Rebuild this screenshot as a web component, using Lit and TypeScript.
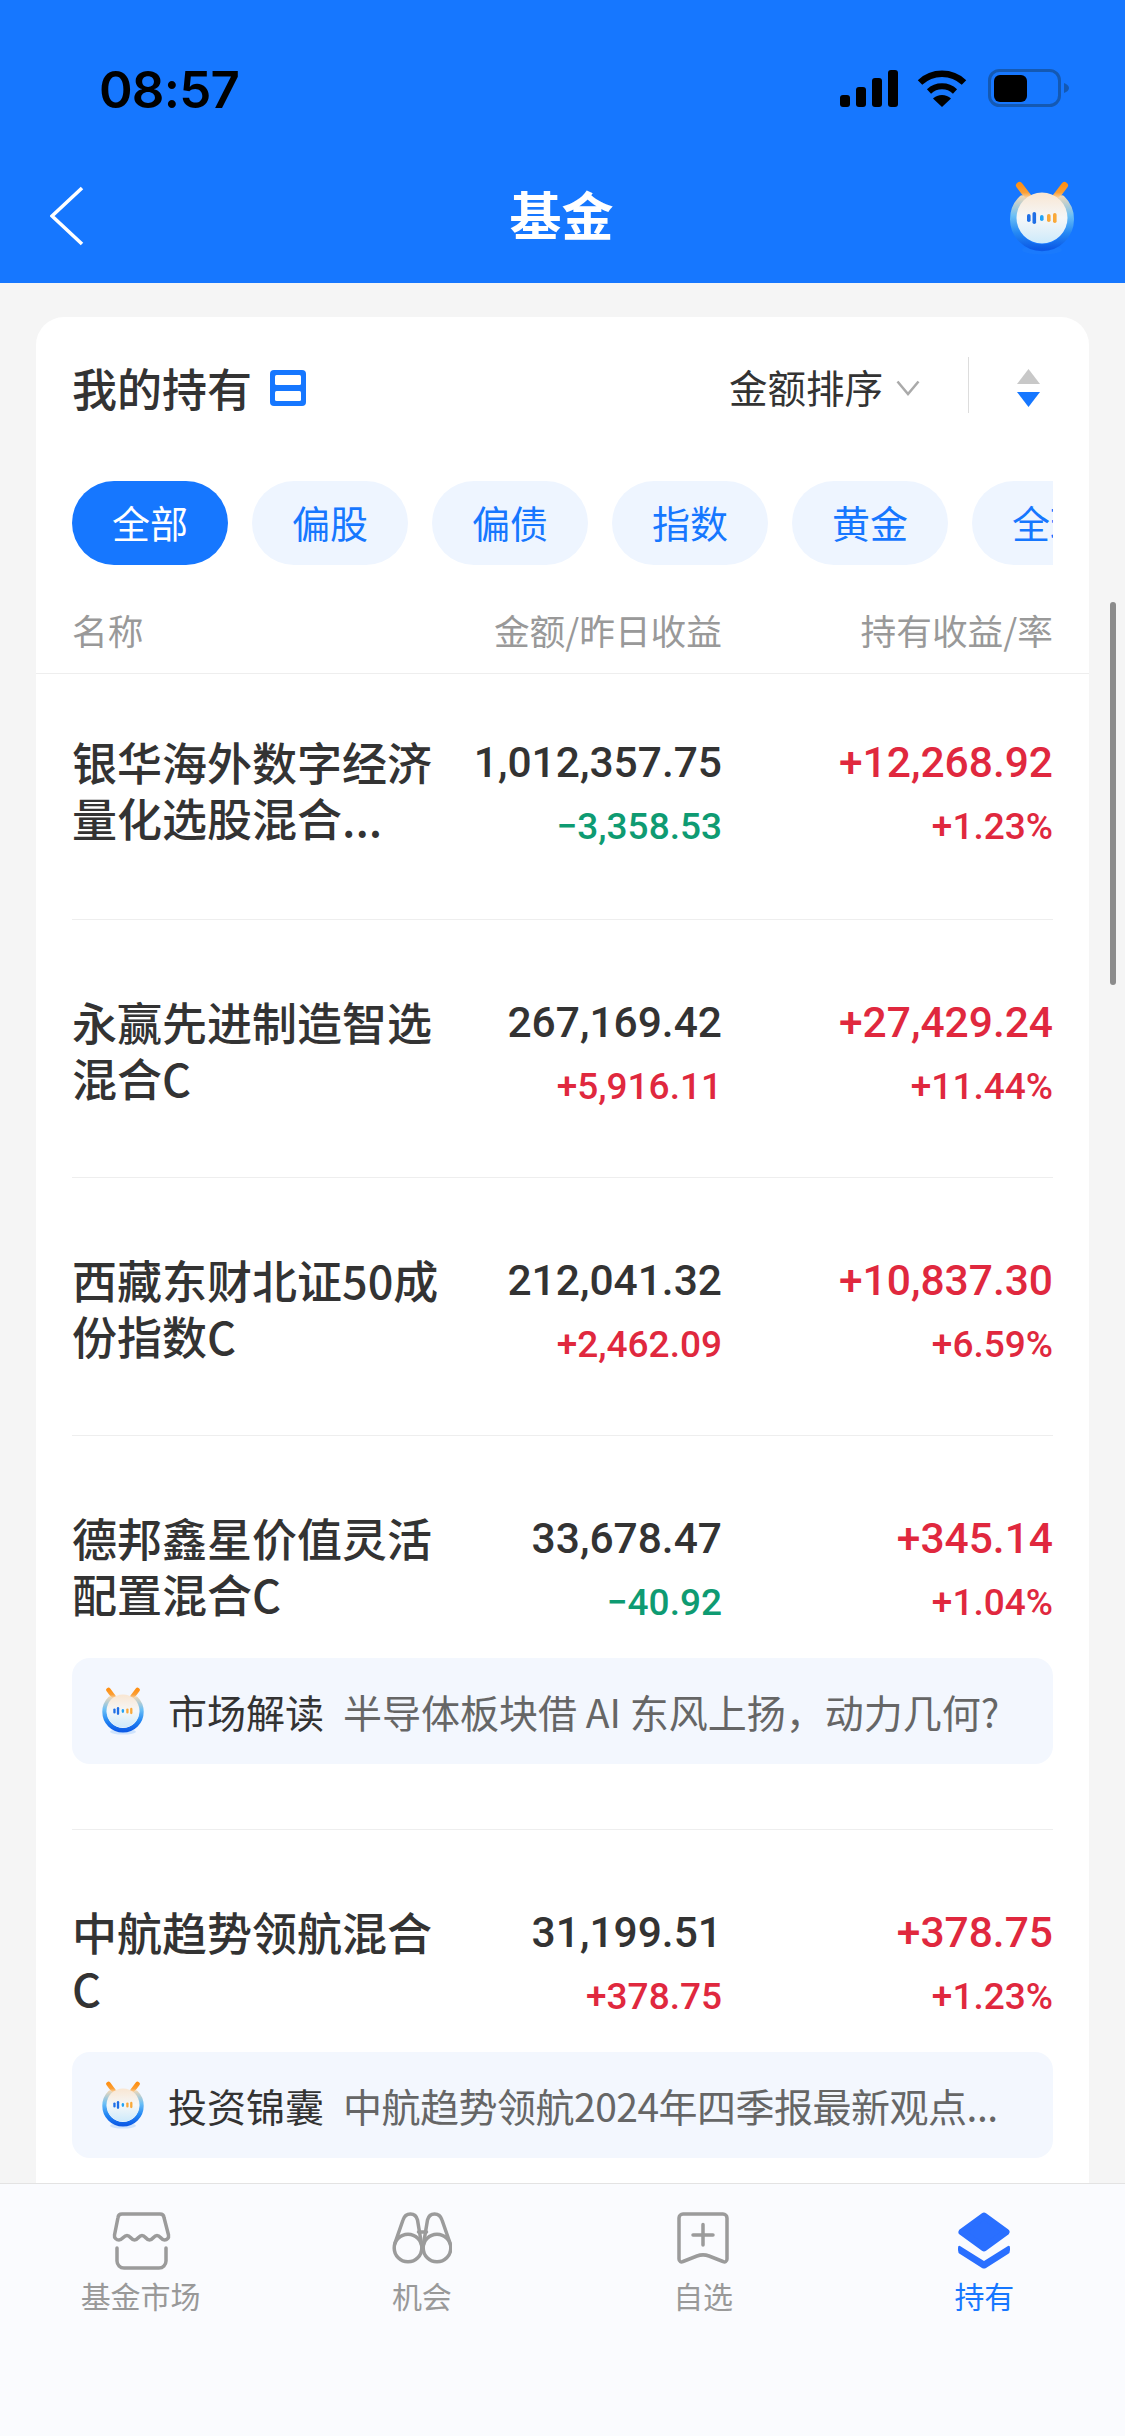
import { LitElement, html, css, svg } from "lit";
import { customElement } from "lit/decorators.js";

@customElement("mascot-icon")
class MascotIcon extends LitElement {
  static styles = css`
    :host { display: block; }
    svg { display: block; width: 100%; height: 100%; }
  `;
  render() {
    return html`<svg viewBox="-34 -38 68 74" aria-hidden="true">
      <defs>
        <linearGradient id="ring" gradientUnits="userSpaceOnUse" x1="0" y1="-24" x2="0" y2="30">
          <stop offset="0" stop-color="#f6d9b4"/>
          <stop offset="0.38" stop-color="#6cc0f6"/>
          <stop offset="0.7" stop-color="#2488f4"/>
          <stop offset="1" stop-color="#0c5ae6"/>
        </linearGradient>
        <linearGradient id="disc" x1="0.5" y1="0" x2="0.5" y2="1">
          <stop offset="0" stop-color="#f9e6d2"/>
          <stop offset="0.5" stop-color="#f5f7f8"/>
          <stop offset="1" stop-color="#cdeafb"/>
        </linearGradient>
        <linearGradient id="ear" gradientUnits="userSpaceOnUse" x1="0" y1="-35" x2="0" y2="-21">
          <stop offset="0" stop-color="#ff8f12"/>
          <stop offset="0.6" stop-color="#fb9f35"/>
          <stop offset="1" stop-color="#f8d3a4"/>
        </linearGradient>
      </defs>
      <ellipse cx="0" cy="31" rx="20" ry="4.500" fill="#2a8cf5" opacity="0.18"/>
      <path d="M-22.500 -33.500L-13 -21" stroke="url(#ear)" stroke-width="7" stroke-linecap="round" fill="none"/>
      <path d="M22.500 -33.500L13 -21" stroke="url(#ear)" stroke-width="7" stroke-linecap="round" fill="none"/>
      <path d="M-20 -20A28.500 28.500 0 1 0 20 -20" fill="none" stroke="url(#ring)" stroke-width="7" stroke-linecap="round"/>
      <circle cx="0" cy="-1" r="25.500" fill="url(#disc)"/>
      <rect x="-15" y="-5" width="3.600" height="8" rx="1.800" fill="#1f6fe6"/>
      <rect x="-9.500" y="-7" width="3.600" height="12" rx="1.800" fill="#1f6fe6"/>
      <rect x="-2" y="-4" width="3.600" height="6" rx="1.800" fill="#22a4f5"/>
      <rect x="5" y="-5" width="3.600" height="8" rx="1.800" fill="#f9a93a"/>
      <rect x="11" y="-6" width="3.600" height="10" rx="1.800" fill="#f9a93a"/>
    </svg>`;
  }
}

interface Fund {
  name: string[];
  amount: string;
  daily: string;
  gain: string;
  rate: string;
  banner?: [string, string];
  tight?: boolean;
}

const FUNDS: Fund[] = [
  { name: ["银华海外数字经济", "量化选股混合..."], amount: "1,012,357.75", daily: "−3,358.53", gain: "+12,268.92", rate: "+1.23%" },
  { name: ["永赢先进制造智选", "混合C"], amount: "267,169.42", daily: "+5,916.11", gain: "+27,429.24", rate: "+11.44%" },
  { name: ["西藏东财北证50成", "份指数C"], amount: "212,041.32", daily: "+2,462.09", gain: "+10,837.30", rate: "+6.59%" },
  { name: ["德邦鑫星价值灵活", "配置混合C"], amount: "33,678.47", daily: "−40.92", gain: "+345.14", rate: "+1.04%", banner: ["市场解读", "半导体板块借 AI 东风上扬，动力几何?"] },
  { name: ["中航趋势领航混合", "C"], amount: "31,199.51", daily: "+378.75", gain: "+378.75", rate: "+1.23%", banner: ["投资锦囊", "中航趋势领航2024年四季报最新观点..."], tight: true },
];

const CHIPS = ["全部", "偏股", "偏债", "指数", "黄金", "全球"];

const storeIcon = svg`<path d="M11 3H49a4 4 0 0 1 4 3.500L57.500 24c.6 3-1.500 5-4 5-3.500 0-4-4.500-7.500-4.500S42 29 38.500 29 34.500 24.500 31 24.500 27 29 23.500 29 19.500 24.500 16 24.500 11.500 29 8 29c-2.500 0-5-2-4.500-5L7 6.500A4 4 0 0 1 11 3Z"/><path d="M6 37V50a7 7 0 0 0 7 7H48a7 7 0 0 0 7-7V37"/>`;
const binoIcon = svg`<circle cx="16" cy="37" r="13.800"/><circle cx="45" cy="37" r="13.800"/><path d="M3 32L11 9C13.500 1 23.500 1 25.500 9L29.500 33"/><path d="M58 32L50 9C47.500 1 37.500 1 35.500 9L31.500 33"/><path d="M26.500 21H34.500"/>`;
const bookIcon = svg`<path d="M7 3H47a4 4 0 0 1 4 4V48c0 2.500-2 3.500-4 2.500L33 45c-4-1.500-8-1.500-12 0L7 50.500c-2 1-4 0-4-2.500V7a4 4 0 0 1 4-4Z"/><path d="M27 13.500V34M17 24H37"/>`;

const TABS = [
  { label: "基金市场", w: 60, vb: "0 0 60 60", icon: storeIcon },
  { label: "机会", w: 60, vb: "0 0 60 60", icon: binoIcon },
  { label: "自选", w: 54, vb: "0 0 54 60", icon: bookIcon },
];

@customElement("app-root")
class AppRoot extends LitElement {
  static styles = css`
    :host {
      display: flex;
      flex-direction: column;
      width: 1125px;
      height: 2436px;
      overflow: hidden;
      background: #f5f5f5;
      color: #333;
      font-family: "Noto Sans CJK SC", "Noto Sans", sans-serif;
    }
    .head { background: #1677ff; height: 283px; flex: none; }
    .status {
      height: 176px; display: flex; align-items: center; justify-content: space-between;
      padding: 0 56px 0 99px; box-sizing: border-box;
    }
    .time {
      font-family: Inter, "Liberation Sans", sans-serif; font-weight: 600; font-size: 51px;
      letter-spacing: -0.800px; color: #000; line-height: 1; padding-top: 2px;
    }
    .sys { display: flex; align-items: center; gap: 19px; }
    .sys svg { display: block; }
    .nav {
      height: 80px; display: grid; grid-template-columns: 1fr auto 1fr; align-items: center;
      padding: 0 52px 0 50px;
    }
    .nav-title { color: #fff; font-size: 52px; font-weight: 700; line-height: 1; padding-bottom: 5px; }
    .back { display: block; }
    .nav-end { justify-self: end; width: 68px; height: 74px; margin: 4px -3px 0 0; }

    .main { position: relative; flex: 1; overflow: hidden; padding-top: 34px; min-height: 0; }
    .card {
      margin: 0 36px; background: #fff; border-radius: 28px 28px 0 0; padding-top: 34px;
    }
    .title-row {
      height: 74px; display: flex; align-items: center; padding: 0 49px 0 36px;
    }
    .title { font-size: 45px; font-weight: 500; line-height: 1; padding-bottom: 2px; }
    .layout { margin-left: 18px; display: block; }
    .spacer { flex: 1; }
    .sort { font-size: 38.500px; color: #333; line-height: 1; padding-bottom: 4px; }
    .sort-chev { margin-left: 13px; display: block; }
    .divider { width: 1px; height: 56px; background: #ddd; margin: -6px 48px 0 48px; }
    .arrows { display: block; }

    .chips {
      display: flex; gap: 24px; margin: 56px 36px 0; overflow: hidden;
    }
    .chip {
      flex: none; width: 156px; height: 84px; border-radius: 42px; background: #eef5ff; color: #1677ff;
      font-size: 38px; display: flex; align-items: center; justify-content: center; line-height: 1;
      padding-bottom: 2px; box-sizing: border-box;
    }
    .chip.on { background: #1677ff; color: #fff; }

    .cols { display: grid; grid-template-columns: 370px 280px 331px; }
    .thead {
      margin: 0; padding: 45px 36px 23px; border-bottom: 1px solid #eee;
      font-size: 35.700px; line-height: 40px; color: #999;
    }
    .r { text-align: right; }

    .row { margin: 0 36px; padding: 77px 0 68px; border-bottom: 1px solid #eee; }
    .row.first { padding-top: 63px; padding-bottom: 70px; }
    .row.has-banner { padding-bottom: 65px; }
    .name { font-size: 45px; font-weight: 500; line-height: 56px; white-space: nowrap; color: #333; margin-top: -3px; }
    .num {
      font-family: Roboto, "Liberation Sans", sans-serif; font-weight: 500; font-size: 42.500px;
      line-height: 52px; text-align: right; white-space: nowrap;
    }
    .sub {
      font-family: Roboto, "Liberation Sans", sans-serif; font-weight: 500; font-size: 37px;
      line-height: 45px; margin-top: 15px; text-align: right; white-space: nowrap;
    }
    .red { color: #e0283e; }
    .green { color: #0e9b72; }

    .banner {
      margin-top: 33px; height: 106px; box-sizing: border-box; background: #f3f7fe; border-radius: 18px;
      display: flex; align-items: center; padding: 0 30px 0 29px; font-size: 39px; line-height: 1;
    }
    .banner-icon { width: 44px; height: 48px; flex: none; margin-right: 19px; }
    .banner-tag { flex: none; color: #333; margin-left: 4px; }
    .banner-text { color: #666; margin-left: 19px; white-space: nowrap; }
    .banner-text.tight { letter-spacing: -0.500px; }

    .thumb {
      position: absolute; right: 9px; top: 319px; width: 6px; height: 383px; border-radius: 3px; background: #8c8c8c;
    }

    .tabs {
      flex: none; height: 253px; box-sizing: border-box; background: #fafbfe; border-top: 1px solid #e3e3e3;
      display: grid; grid-template-columns: repeat(4, 1fr); padding-top: 27px;
    }
    .tab { display: flex; flex-direction: column; align-items: center; }
    .tab-icon { height: 60px; display: flex; align-items: center; justify-content: center; }
    .tab-icon svg { display: block; fill: none; stroke: #9b9b9b; stroke-width: 3.500; stroke-linecap: round; stroke-linejoin: round; }
    .tab-label { margin-top: 4px; font-size: 30px; line-height: 40px; color: #999; }
    .tab.on .tab-label { color: #1677ff; }
  `;

  private fundRow(f: Fund, i: number) {
    const sign = (v: string) => (v.startsWith("+") ? "red" : "green");
    return html`<div class="row ${i === 0 ? "first" : ""} ${f.banner ? "has-banner" : ""}">
      <div class="cols">
        <div class="name">${f.name.map((l) => html`<div>${l}</div>`)}</div>
        <div>
          <div class="num">${f.amount}</div>
          <div class="sub ${sign(f.daily)}">${f.daily}</div>
        </div>
        <div>
          <div class="num ${sign(f.gain)}">${f.gain}</div>
          <div class="sub ${sign(f.rate)}">${f.rate}</div>
        </div>
      </div>
      ${f.banner
        ? html`<div class="banner">
            <mascot-icon class="banner-icon"></mascot-icon>
            <span class="banner-tag">${f.banner[0]}</span>
            <span class="banner-text ${f.tight ? "tight" : ""}">${f.banner[1]}</span>
          </div>`
        : ""}
    </div>`;
  }

  render() {
    return html`
      <div class="head">
        <div class="status">
          <span class="time">08:57</span>
          <div class="sys">
            <svg width="58" height="37" viewBox="0 0 58 37">
              <rect x="0" y="25" width="10" height="12" rx="3"/>
              <rect x="16" y="17" width="10" height="20" rx="3"/>
              <rect x="32" y="8" width="10" height="29" rx="3"/>
              <rect x="48" y="0" width="10" height="37" rx="3"/>
            </svg>
            <svg width="50" height="37" viewBox="0 0 50 37">
              <path d="M3 12.500A32 32 0 0 1 47 12.500" fill="none" stroke="#000" stroke-width="6.500"/>
              <path d="M12 21.500A19 19 0 0 1 38 21.500" fill="none" stroke="#000" stroke-width="6"/>
              <path d="M25 37L16 28.500A13 13 0 0 1 34 28.500Z"/>
            </svg>
            <svg width="81" height="38" viewBox="0 0 81 38" style="margin-left:2px">
              <rect x="1.500" y="1.500" width="70" height="35" rx="10" fill="none" stroke="#1459b3" stroke-width="3"/>
              <rect x="6" y="6" width="33" height="27" rx="6"/>
              <path d="M76 14C79 15 81 17 81 19S79 23 76 24Z" fill="#1459b3"/>
            </svg>
          </div>
        </div>
        <div class="nav">
          <svg class="back" width="34" height="60" viewBox="0 0 34 60">
            <path d="M32 2L2 30L32 58" fill="none" stroke="#fff" stroke-width="3.600" stroke-linejoin="miter"/>
          </svg>
          <div class="nav-title">基金</div>
          <mascot-icon class="nav-end"></mascot-icon>
        </div>
      </div>

      <div class="main">
        <div class="card">
          <div class="title-row">
            <span class="title">我的持有</span>
            <svg class="layout" width="36" height="36" viewBox="0 0 36 36">
              <rect x="0" y="0" width="36" height="36" rx="4" fill="#1677ff"/>
              <rect x="5" y="5" width="26" height="10" rx="1.500" fill="#fff"/>
              <rect x="5" y="21" width="26" height="10" rx="1.500" fill="#fff"/>
            </svg>
            <span class="spacer"></span>
            <span class="sort">金额排序</span>
            <svg class="sort-chev" width="24" height="16" viewBox="0 0 24 16">
              <path d="M1.500 1.500L12 14L22.500 1.500" fill="none" stroke="#aaa" stroke-width="2.500"/>
            </svg>
            <span class="divider"></span>
            <svg class="arrows" width="23" height="38" viewBox="0 0 23 38">
              <path d="M11.500 0L23 15H0Z" fill="#c8c8c8"/>
              <path d="M0 23H23L11.500 38Z" fill="#1677ff"/>
            </svg>
          </div>

          <div class="chips">
            ${CHIPS.map((c, i) => html`<div class="chip ${i === 0 ? "on" : ""}">${c}</div>`)}
          </div>

          <div class="cols thead">
            <div>名称</div>
            <div class="r">金额/昨日收益</div>
            <div class="r">持有收益/率</div>
          </div>

          ${FUNDS.map((f, i) => this.fundRow(f, i))}
        </div>
        <div class="thumb"></div>
      </div>

      <div class="tabs">
        ${TABS.map(
          (t) => html`<div class="tab">
            <div class="tab-icon"><svg width=${t.w} height="60" viewBox=${t.vb}>${t.icon}</svg></div>
            <div class="tab-label">${t.label}</div>
          </div>`
        )}
        <div class="tab on">
          <div class="tab-icon">
            <svg width="52" height="58" viewBox="0 0 52 58" style="stroke:none;fill:#2a6fff">
              <path d="M26 4L48 20L26 36L4 20Z" stroke="#2a6fff" stroke-width="7" stroke-linejoin="round"/>
              <path d="M2 34L26 49L50 34Q52 33 52 36V38Q52 41 50 42L28 56Q26 57 24 56L2 42Q0 41 0 38V36Q0 33 2 34Z"/>
            </svg>
          </div>
          <div class="tab-label">持有</div>
        </div>
      </div>
    `;
  }
}
